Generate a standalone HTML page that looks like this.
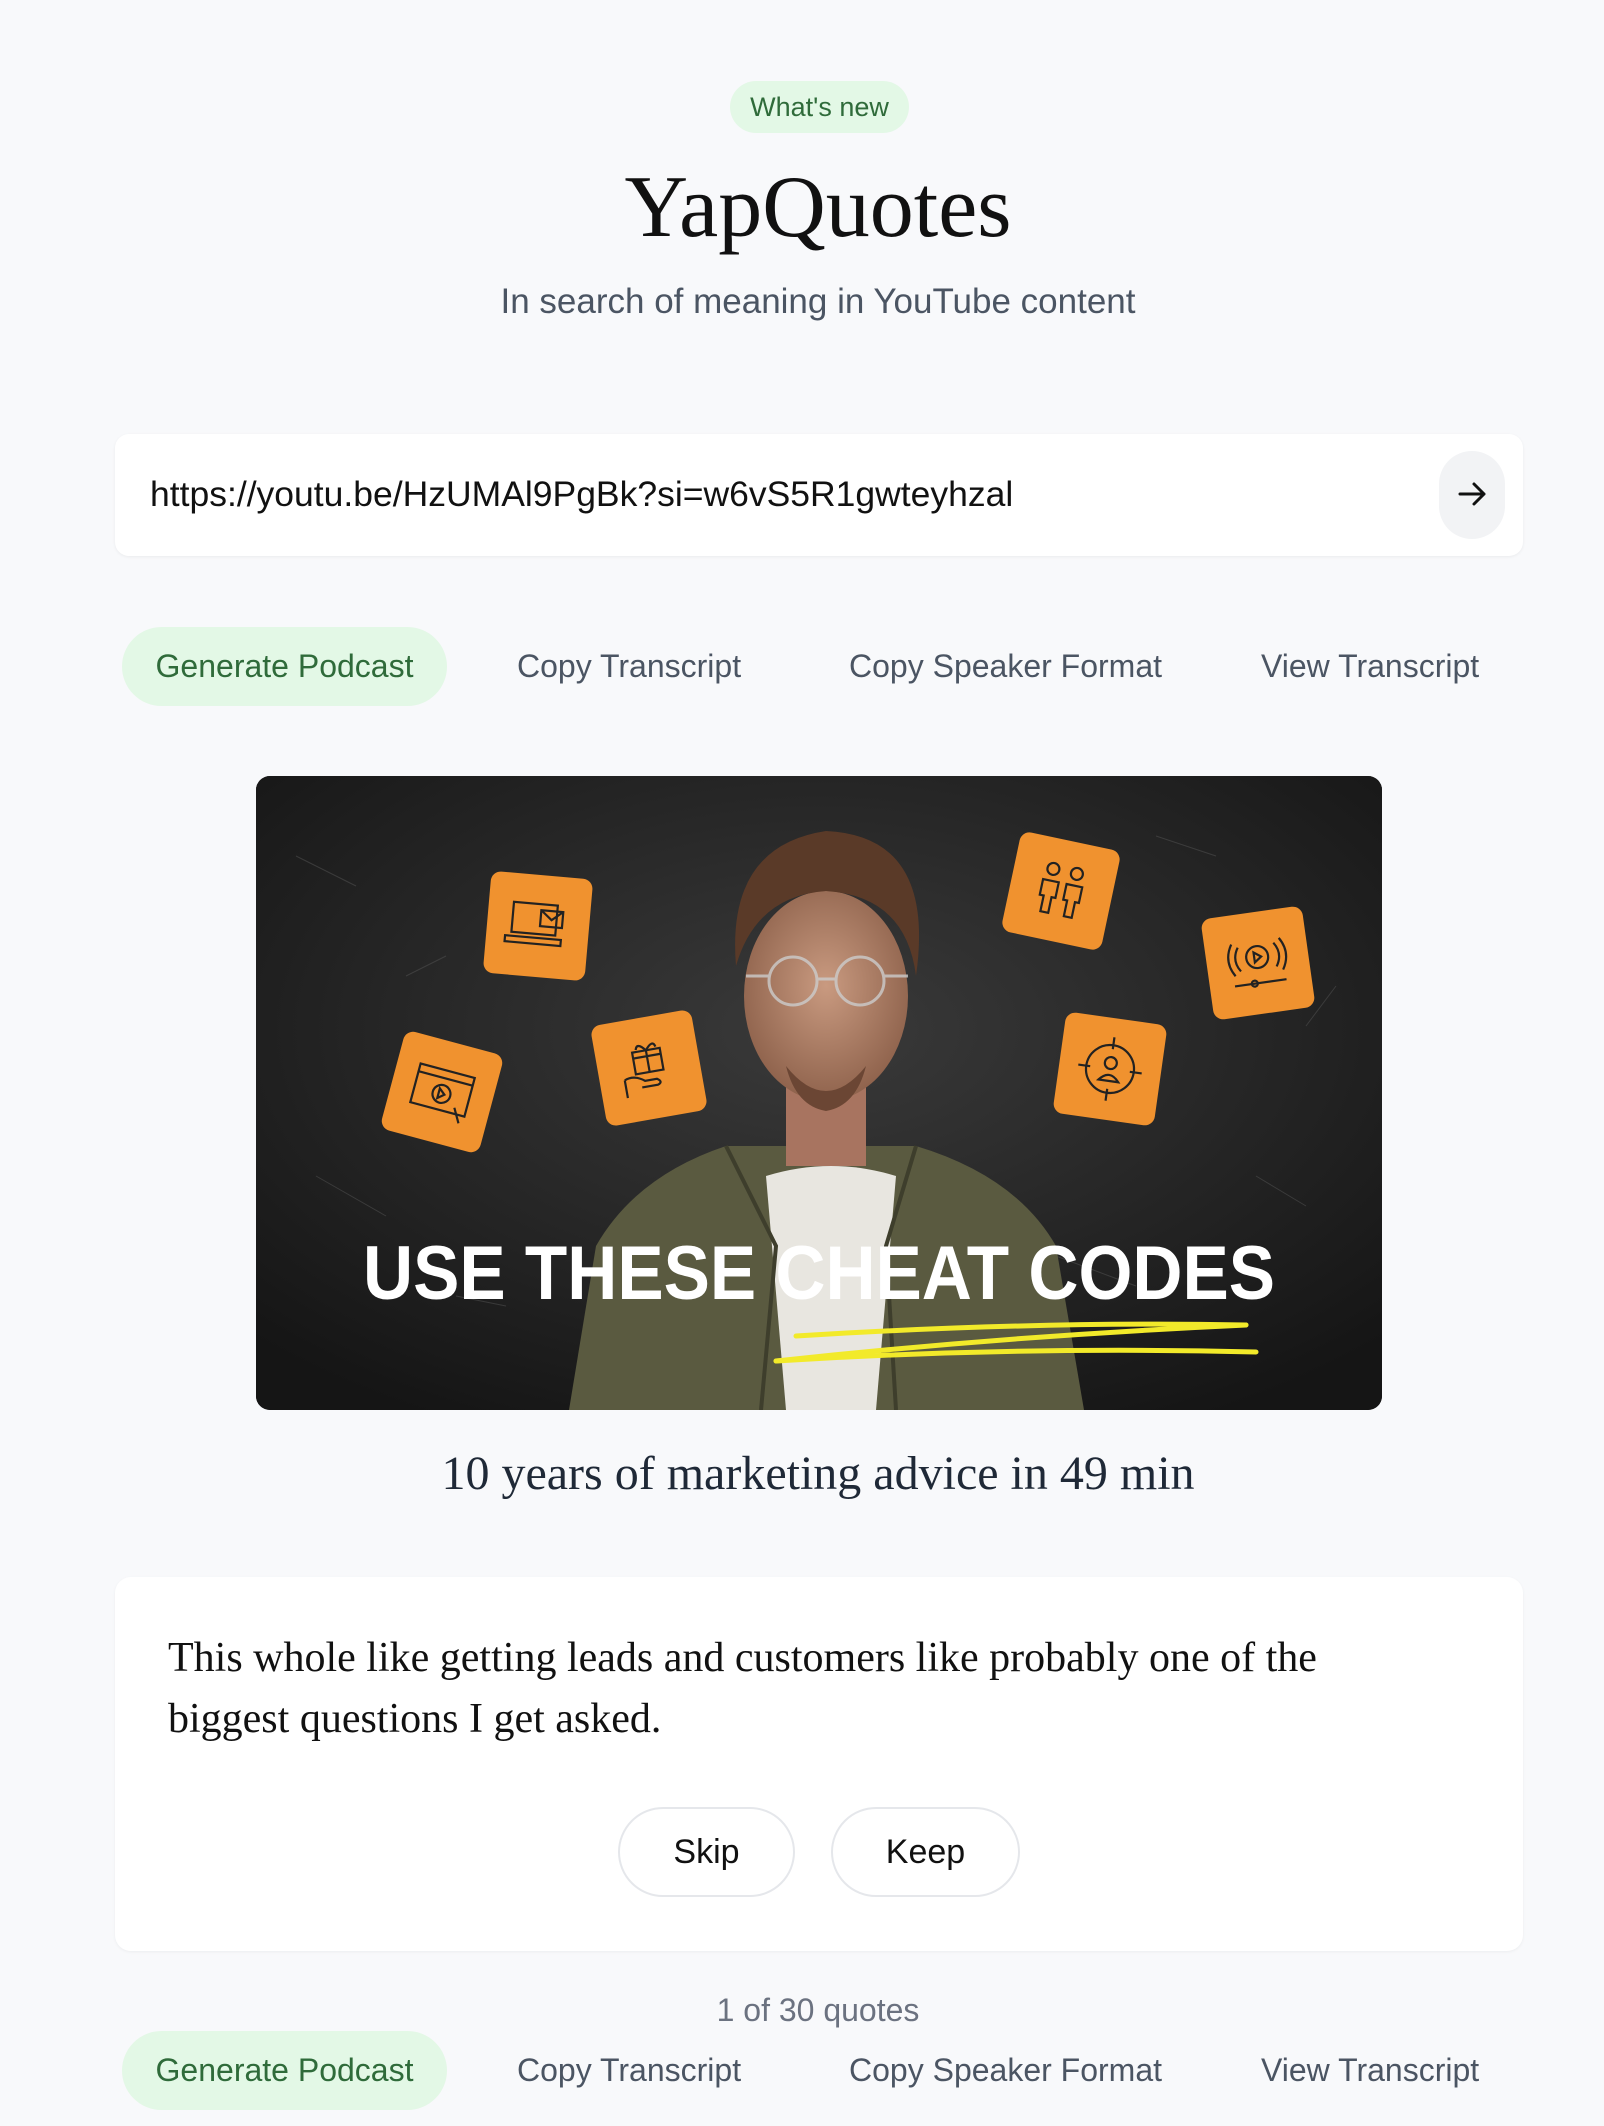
<!DOCTYPE html>
<html><head><meta charset="utf-8">
<style>
*{margin:0;padding:0;box-sizing:border-box}
html,body{width:1604px;height:2126px;background:#f8f9fb;overflow:hidden}
body{position:relative;font-family:"Liberation Sans",sans-serif}
.abs{position:absolute}
.c{left:18px;width:1600px;text-align:center}
.pill{left:730px;top:81px;width:179px;height:52px;border-radius:26px;background:#e3f8e6;color:#2f6b3a;font-size:27px;line-height:52px;text-align:center}
.title{top:158px;font-family:"Liberation Serif",serif;font-size:88px;line-height:100px;color:#111}
.sub{top:282px;font-size:35px;color:#4b5563;line-height:40px}
.input{left:115px;top:434px;width:1408px;height:122px;background:#fff;border-radius:14px;box-shadow:0 1px 3px rgba(0,0,0,.06)}
.url{left:150px;top:473px;font-size:35.5px;color:#111;line-height:42px}
.go{left:1439px;top:451px;width:66px;height:88px;border-radius:33px;background:#f2f3f5}
.tab{font-size:32px;color:#4b5563;line-height:40px;top:646px}
.gen{left:122px;width:325px;height:79px;border-radius:40px;background:#e3f8e6;color:#2f6b3a;font-size:32px;text-align:center;line-height:79px}
.vt{top:1446px;font-family:"Liberation Serif",serif;font-size:48px;color:#1f2937;line-height:56px}
.card{left:115px;top:1577px;width:1408px;height:374px;background:#fff;border-radius:16px;box-shadow:0 1px 3px rgba(0,0,0,.05)}
.quote{left:168px;top:1628px;width:1250px;font-family:"Liberation Serif",serif;font-size:42px;line-height:61px;color:#111}
.btn{top:1807px;height:90px;border:2px solid #e5e7eb;border-radius:45px;background:#fff;font-size:34px;color:#111;text-align:center;line-height:86px}
.count{top:1991px;font-size:32px;color:#6b7280;line-height:38px}
</style></head><body>
<div class="abs pill">What's new</div>
<div class="abs c title">YapQuotes</div>
<div class="abs c sub">In search of meaning in YouTube content</div>
<div class="abs input"></div>
<div class="abs url">https://youtu.be/HzUMAl9PgBk?si=w6vS5R1gwteyhzal</div>
<div class="abs go"><svg width="66" height="88" viewBox="0 0 66 88"><path d="M21 43h24M35 33l10 10-10 10" fill="none" stroke="#111" stroke-width="3" stroke-linecap="round" stroke-linejoin="round"/></svg></div>

<div class="abs gen" style="top:627px">Generate Podcast</div>
<div class="abs tab" style="left:517px">Copy Transcript</div>
<div class="abs tab" style="left:849px">Copy Speaker Format</div>
<div class="abs tab" style="left:1261px">View Transcript</div>

<div class="abs" style="left:256px;top:776px;width:1126px;height:634px;border-radius:14px;overflow:hidden;background:#1a1a1a">
<svg width="1126" height="634" viewBox="0 0 1126 634">
<defs>
<radialGradient id="bg" cx="50%" cy="40%" r="70%"><stop offset="0" stop-color="#3a3a3a"/><stop offset="1" stop-color="#151515"/></radialGradient>
<radialGradient id="face" cx="50%" cy="45%" r="60%"><stop offset="0" stop-color="#c99a80"/><stop offset="1" stop-color="#8a5e48"/></radialGradient>
</defs>
<rect width="1126" height="634" fill="url(#bg)"/>
<g stroke="#555" stroke-width="1" opacity=".5" fill="none">
<path d="M40 80l60 30M150 200l40-20M60 400l70 40M900 60l60 20M1000 400l50 30M1050 250l30-40M200 520l50 10M800 480l80 30"/>
</g>
<path d="M313 634 L340 470 Q380 400 470 370 L660 370 Q760 400 800 470 L828 634 Z" fill="#5a5a40"/>
<path d="M510 400 L530 634 L620 634 L640 400 Q575 380 510 400Z" fill="#e8e6e0"/>
<path d="M470 370 L520 470 L505 634 M660 370 L630 470 L640 634" stroke="#3e3e2c" stroke-width="4" fill="none"/>
<rect x="530" y="300" width="80" height="90" fill="#a87460"/>
<ellipse cx="570" cy="220" rx="82" ry="105" fill="url(#face)"/>
<path d="M480 190 Q470 70 570 55 Q680 60 660 200 Q650 120 570 115 Q500 120 480 190Z" fill="#5a3a28"/>
<path d="M530 290 Q570 340 610 290 Q600 330 570 335 Q540 330 530 290Z" fill="#6b4634"/>
<g fill="none" stroke="#ccc" stroke-width="3" opacity=".8"><circle cx="537" cy="205" r="24"/><circle cx="604" cy="205" r="24"/><path d="M561 203h19M490 200h23M628 200h24"/></g>
<g fill="#f0922f">
<rect x="-51" y="-51" width="102" height="102" rx="10" transform="translate(282,150) rotate(5)"/>
<rect x="-51" y="-51" width="102" height="102" rx="10" transform="translate(186,316) rotate(15)"/>
<rect x="-51" y="-51" width="102" height="102" rx="10" transform="translate(393,292) rotate(-10)"/>
<rect x="-51" y="-51" width="102" height="102" rx="10" transform="translate(805,115) rotate(12)"/>
<rect x="-51" y="-51" width="102" height="102" rx="10" transform="translate(1002,187) rotate(-8)"/>
<rect x="-51" y="-51" width="102" height="102" rx="10" transform="translate(854,293) rotate(8)"/>
</g>
<g fill="none" stroke="#222" stroke-width="2.2">
<g transform="translate(282,150) rotate(5)"><rect x="-26" y="-22" width="44" height="30"/><path d="M-32 12h56v6h-56z"/><rect x="2" y="-16" width="22" height="16"/><path d="M2 -16l11 9 11-9"/></g>
<g transform="translate(186,316) rotate(15)"><rect x="-28" y="-22" width="56" height="40"/><path d="M-28 -14h56"/><circle cx="0" cy="2" r="9"/><path d="M-3 -3l6 5-6 5z"/><path d="M16 12l8 14"/></g>
<g transform="translate(393,292) rotate(-10)"><rect x="-14" y="-18" width="28" height="22"/><path d="M0 -18v22M-14 -12h28M0 -18q-8 -10 -10 -2M0 -18q8 -10 10 -2"/><path d="M-26 8q10 -4 20 4h12q6 4 0 6h-16M-26 8v18"/></g>
<g transform="translate(805,115) rotate(12)"><circle cx="-12" cy="-20" r="6"/><circle cx="12" cy="-20" r="6"/><path d="M-20 -8h16v16h-4v16h-8v-16h-4zM4 -8h16v16h-4v16h-8v-16h-4z"/></g>
<g transform="translate(1002,187) rotate(-8)"><circle cx="0" cy="-6" r="11"/><path d="M-3 -11l7 5-7 5z"/><path d="M-18 -18q-8 12 0 24M18 -18q8 12 0 24M-24 -22q-10 16 0 32M24 -22q10 16 0 32M-26 20h52"/><circle cx="-6" cy="20" r="3"/></g>
<g transform="translate(854,293) rotate(8)"><circle cx="0" cy="0" r="24"/><path d="M0 -32v12M0 20v12M-32 0h12M20 0h12"/><circle cx="0" cy="-6" r="6"/><path d="M-10 12q10 -12 20 0z"/></g>
</g>
<text x="107" y="523" textLength="912" lengthAdjust="spacingAndGlyphs" font-family="Liberation Sans" font-weight="bold" font-size="76" fill="#fff">USE THESE CHEAT CODES</text>
<g stroke="#f2ea2a" stroke-width="5" fill="none" stroke-linecap="round">
<path d="M540 560 Q780 545 990 549"/>
<path d="M990 549 Q750 560 520 585"/>
<path d="M520 585 Q760 570 1000 576"/>
</g>
</svg>
</div>

<div class="abs c vt">10 years of marketing advice in 49 min</div>

<div class="abs card"></div>
<div class="abs quote">This whole like getting leads and customers like probably one of the biggest questions I get asked.</div>
<div class="abs btn" style="left:618px;width:177px">Skip</div>
<div class="abs btn" style="left:831px;width:189px">Keep</div>

<div class="abs c count">1 of 30 quotes</div>
<div class="abs gen" style="top:2031px">Generate Podcast</div>
<div class="abs tab" style="left:517px;top:2050px">Copy Transcript</div>
<div class="abs tab" style="left:849px;top:2050px">Copy Speaker Format</div>
<div class="abs tab" style="left:1261px;top:2050px">View Transcript</div>
</body></html>
